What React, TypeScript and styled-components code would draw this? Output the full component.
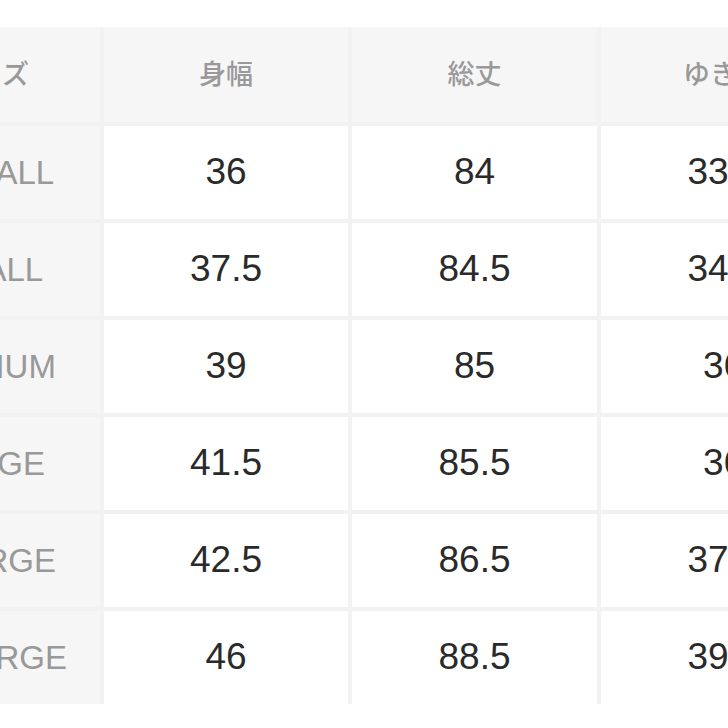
import React from "react";
import styled, { createGlobalStyle } from "styled-components";

const GlobalStyle = createGlobalStyle`
  html, body {
    margin: 0;
    padding: 0;
    background: #ffffff;
  }
  body {
    overflow: hidden;
  }
`;

const Page = styled.div`
  width: 728px;
  height: 728px;
  overflow: hidden;
  background: #ffffff;
  padding-top: 27px;
  box-sizing: border-box;
`;

const Table = styled.div`
  display: grid;
  grid-template-columns: 222px 244px 245px 245px;
  grid-template-rows: 95px repeat(6, 93px);
  gap: 4px;
  background: #f2f2f2;
  width: max-content;
  margin-left: -122px;
`;

const HeadCell = styled.div`
  background: #f6f6f6;
  display: flex;
  align-items: center;
  justify-content: center;
  padding-bottom: 5px;
  box-sizing: border-box;
  font-family: "Noto Sans CJK JP", "Liberation Sans", sans-serif;
  font-size: 27px;
  font-weight: 500;
  color: #999999;
`;

const LabelCell = styled.div`
  background: #f6f6f6;
  display: flex;
  align-items: center;
  justify-content: center;
  font-family: "Liberation Sans", Arial, sans-serif;
  font-size: 33px;
  color: #999999;
`;

const ValueCell = styled.div`
  background: #ffffff;
  display: flex;
  align-items: center;
  justify-content: center;
  padding-bottom: 2px;
  box-sizing: border-box;
  font-family: "Liberation Sans", Arial, sans-serif;
  font-size: 37px;
  color: #2a2a2a;
`;

const headers = ["サイズ", "身幅", "総丈", "ゆき丈"];

const rows: [string, string, string, string][] = [
  ["XSMALL", "36", "84", "33.5"],
  ["SMALL", "37.5", "84.5", "34.5"],
  ["MEDIUM", "39", "85", "36"],
  ["LARGE", "41.5", "85.5", "36"],
  ["XLARGE", "42.5", "86.5", "37.5"],
  ["XXLARGE", "46", "88.5", "39.5"],
];

export default function App() {
  return (
    <>
      <GlobalStyle />
      <Page>
        <Table>
          {headers.map((h) => (
            <HeadCell key={h}>{h}</HeadCell>
          ))}
          {rows.map((r) => (
            <React.Fragment key={r[0]}>
              <LabelCell>{r[0]}</LabelCell>
              <ValueCell>{r[1]}</ValueCell>
              <ValueCell>{r[2]}</ValueCell>
              <ValueCell>{r[3]}</ValueCell>
            </React.Fragment>
          ))}
        </Table>
      </Page>
    </>
  );
}
